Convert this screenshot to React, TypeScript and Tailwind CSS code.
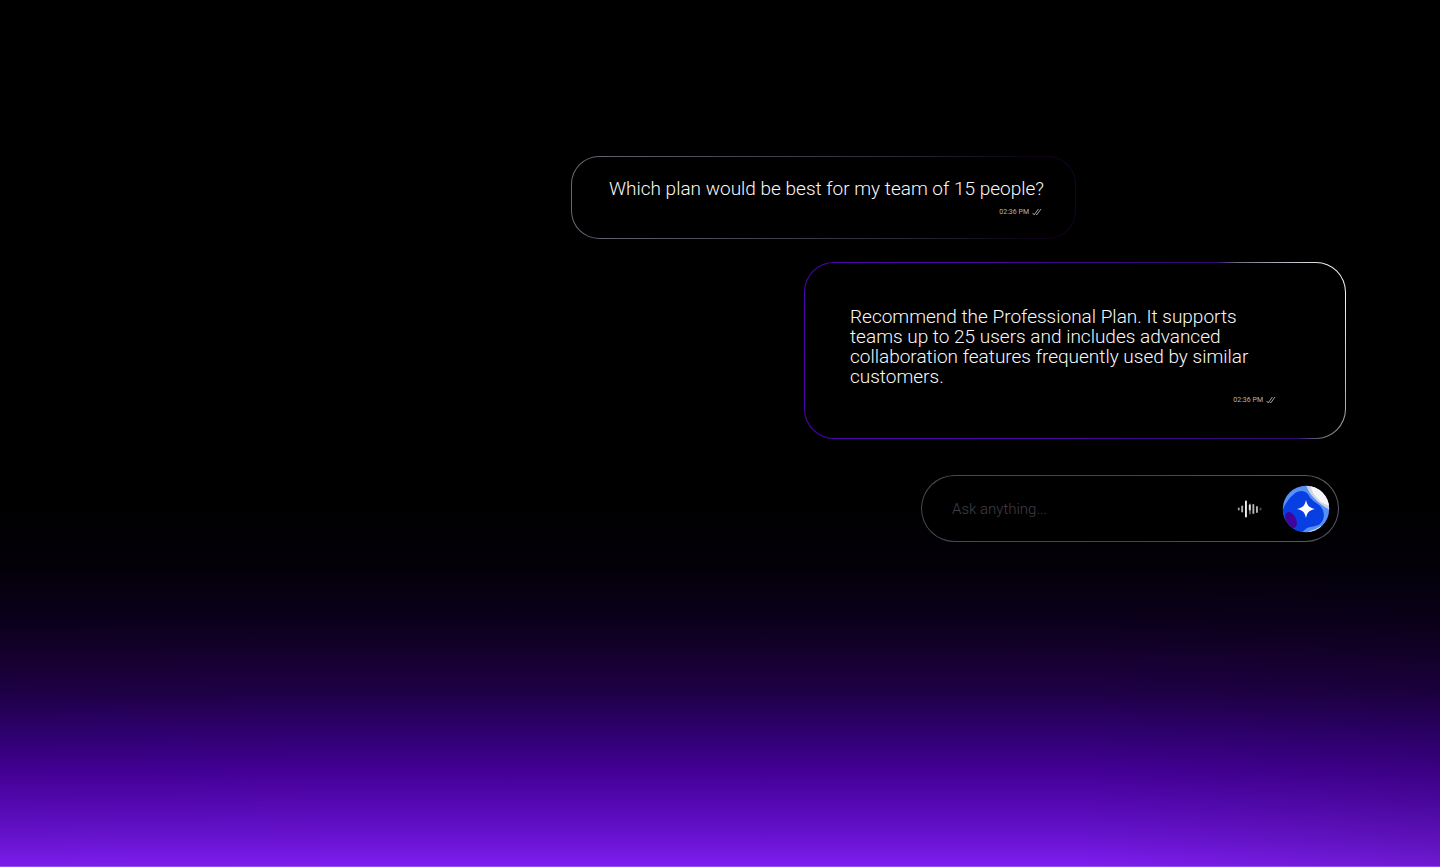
import React, { useState } from 'react';

interface MessageProps {
  text: string;
  time: string;
  className: string;
  textClassName?: string;
}

const DoubleCheck = () => (
  <svg width="10" height="8" viewBox="0 0 10 8" fill="none" stroke="#b4b4b8" strokeWidth="0.9" aria-hidden="true">
    <path d="M0.6 5L2.2 6.9L6.4 1" />
    <path d="M4 6.1L4.7 6.9L9 1" />
  </svg>
);

const Message = ({ text, time, className, textClassName = '' }: MessageProps) => (
  <article className={`flex flex-col border border-transparent ${className}`}>
    <p className={`text-[19px] leading-5 font-light text-[#f8f8fa] ${textClassName}`}>{text}</p>
    <div className="mt-[9px] flex items-center justify-end gap-[3px] text-[#b4b4b8]">
      <time className="text-[7px] leading-2">{time}</time>
      <DoubleCheck />
    </div>
  </article>
);

const waveBars = [
  { x: 0.8, y: 9, h: 3, o: 0.65 },
  { x: 4.2, y: 9, h: 7, o: 0.75 },
  { x: 8, y: 9, h: 17, o: 1 },
  { x: 11.8, y: 7.5, h: 6, o: 0.9 },
  { x: 12, y: 9, h: 11, o: 0.4 },
  { x: 15.4, y: 9, h: 10, o: 0.75 },
  { x: 19, y: 9.5, h: 7, o: 0.75 },
  { x: 22.6, y: 9, h: 3, o: 0.3 },
];

const Waveform = () => (
  <svg width="25" height="18" viewBox="0 0 25 18" fill="#f0eef4" aria-hidden="true">
    {waveBars.map((bar) => (
      <rect key={bar.x} x={bar.x} y={bar.y - bar.h / 2} width="1.9" height={bar.h} rx="0.9" opacity={bar.o} />
    ))}
  </svg>
);

const Orb = () => (
  <svg width="48" height="48" viewBox="0 0 48 48" aria-hidden="true">
    <defs>
      <clipPath id="orb">
        <circle cx="24" cy="24" r="23.2" />
      </clipPath>
    </defs>
    <g clipPath="url(#orb)">
      <rect width="48" height="48" fill="#5791f7" />
      <path
        d="M0 27C2 21 6 14 12 9C16 5 23 5 26 9C29 16 36 18 39 22C43 27 43 35 38 39C34 42 29 41 25 43L19 48H0Z"
        fill="#083fe2"
      />
      <path d="M24 0C26 5 28 9 32 13C37 18 41 21 48 25V0Z" fill="#d2d4dc" />
      <path d="M29 0C29 6 32 10 36 14C39 18 43 19 48 21V0Z" fill="#f6f6f8" />
      <path d="M25 48C28 45 34 45 39 41L42 46Z" fill="#dfe3ec" />
      <ellipse cx="9" cy="35" rx="5" ry="8.5" transform="rotate(-27 9 35)" fill="#42039a" />
    </g>
    <path
      d="M24 15C25.4 20.8 27 22.6 33 24C27 25.4 25.4 27.2 24 33C22.6 27.2 21 25.4 15 24C21 22.6 22.6 20.8 24 15Z"
      fill="#ffffff"
    />
  </svg>
);

const AskBar = () => {
  const [question, setQuestion] = useState('');

  return (
    <form
      onSubmit={(e) => e.preventDefault()}
      className="mt-9 mr-[7px] flex h-[67px] w-full max-w-[418px] items-center self-end rounded-full border border-transparent pr-2 pl-[30px] [background:linear-gradient(#000,#000)_padding-box,linear-gradient(90deg,#4b4852,#45434a_50%,#5c5b60)_border-box]"
    >
      <input
        type="text"
        aria-label="Ask anything"
        value={question}
        onChange={(e) => setQuestion(e.target.value)}
        placeholder="Ask anything..."
        className="min-w-0 flex-1 bg-transparent text-[15px] leading-5 font-light text-white outline-none placeholder:text-[#423e48]"
      />
      <button type="button" aria-label="Voice input" className="mr-5">
        <Waveform />
      </button>
      <button type="submit" aria-label="Send">
        <Orb />
      </button>
    </form>
  );
};

export default function App() {
  return (
    <main className="flex min-h-screen flex-col border-b border-[#9550f0] px-[94px] pt-[156px] pb-20 font-['Roboto',sans-serif] [background:linear-gradient(90deg,rgba(0,0,0,0.02),transparent_25%,transparent_75%,rgba(0,0,0,0.12)),linear-gradient(180deg,#000_57%,#030008_65%,#0a001a_71%,#14002b_75%,#1f0047_80%,#2d006b_84%,#430096_89%,#5509b4_93%,#6a14d3_97%,#7e1df0_100%)]">
      <section className="ml-auto flex w-full max-w-[775px] flex-col">
        <Message
          text="Which plan would be best for my team of 15 people?"
          time="02:36 PM"
          className="w-full max-w-[505px] self-start rounded-[28px] pt-[22px] pr-[33px] pb-[22px] pl-[37px] [background:linear-gradient(#000,#000)_padding-box,linear-gradient(90deg,#6a6574,#4b4853_30%,#2c2933_65%,#0d0318_90%,#160226)_border-box]"
          textClassName="sm:whitespace-nowrap"
        />
        <Message
          text="Recommend the Professional Plan. It supports teams up to 25 users and includes advanced collaboration features frequently used by similar customers."
          time="02:36 PM"
          className="mt-[23px] w-full max-w-[542px] self-end rounded-[30px] pt-11 pr-[69px] pb-[34px] pl-[45px] [background:linear-gradient(#000,#000)_padding-box,linear-gradient(65deg,#4d05b0,#4706a0_35%,#330672_79%,#77757c_83%,#a5a0b0_88%,#f0eff2_97%)_border-box]"
          textClassName="max-w-[410px]"
        />
        <AskBar />
      </section>
    </main>
  );
}
